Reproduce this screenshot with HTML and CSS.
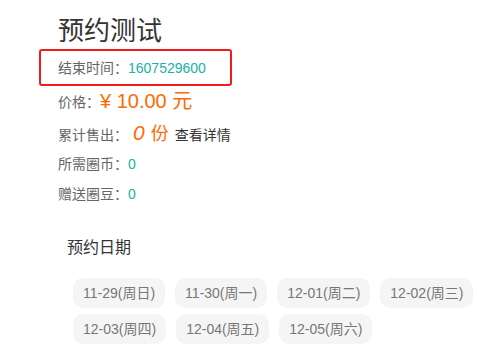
FILE: index.html
```html
<!DOCTYPE html>
<html lang="zh-CN">
<head>
  <meta charset="UTF-8">
  <meta name="viewport" content="width=device-width, initial-scale=1.0">
  <title>预约测试</title>
  <link rel="stylesheet" href="styles.css">
</head>
<body>
  <div class="page">
    <h1 class="title">预约测试</h1>
    <div class="row row-end">
      <span class="label">结束时间：</span><span class="teal">1607529600</span>
    </div>
    <div class="row row-price">
      <span class="label">价格：</span><span class="price">¥ 10.00 元</span>
    </div>
    <div class="row row-sold">
      <span class="label">累计售出：</span><span class="sold-num">0</span><span class="sold-unit">份</span><a class="detail">查看详情</a>
    </div>
    <div class="row">
      <span class="label">所需圈币：</span><span class="teal">0</span>
    </div>
    <div class="row">
      <span class="label">赠送圈豆：</span><span class="teal">0</span>
    </div>

    <div class="dates">
      <h3 class="dates-title">预约日期</h3>
      <div class="chips">
        <span class="chip">11-29(周日)</span>
        <span class="chip">11-30(周一)</span>
        <span class="chip">12-01(周二)</span>
        <span class="chip">12-02(周三)</span>
        <span class="chip">12-03(周四)</span>
        <span class="chip">12-04(周五)</span>
        <span class="chip">12-05(周六)</span>
      </div>
    </div>
  </div>
</body>
</html>
```

FILE: styles.css
```css
body { margin: 0; background: #fff; font-family: "Liberation Sans", "Noto Sans CJK SC", sans-serif; color: #666; }
.page { padding: 13px 0 0 39px; }
.title { margin: 0 0 0 19px; font-size: 26px; font-weight: normal; line-height: 36px; color: #333; }
.row { padding-left: 19px; font-size: 14px; line-height: 30px; height: 30px; }
.row-end { display: inline-block; height: 33px; line-height: 35px; padding: 0 24px 0 17px; border: 2px solid #f21b1b; border-radius: 3px; }
.label { color: #666; }
.teal { color: #17b3a3; }
.row-price { height: 30px; }
.price { font-size: 20px; color: #ff6a00; vertical-align: -1px; }
.row-sold { height: 33px; line-height: 33px; }
.sold-num { display: inline-block; margin-left: 5px; font-size: 21px; font-style: italic; color: #ff6a00; }
.sold-unit { margin-left: 6px; font-size: 18px; color: #ff6a00; }
.detail { margin-left: 6px; color: #333; }
.dates { padding: 27px 0 0 28px; }
.dates-title { margin: 0; font-size: 16px; font-weight: normal; line-height: 24px; color: #333; }
.chips { display: flex; flex-wrap: wrap; gap: 6px 10px; margin-top: 18px; padding-left: 6px; width: 410px; }
.chip { padding: 0 10px; height: 30px; line-height: 30px; font-size: 14px; color: #777; background: #f5f5f5; border-radius: 10px; }
```
